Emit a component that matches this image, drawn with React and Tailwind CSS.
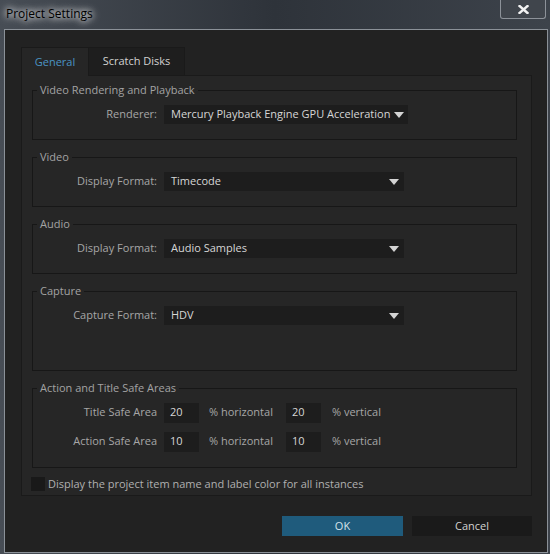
import React from 'react';

function Arrow() {
  return (
    <svg width="10" height="6" viewBox="0 0 10 6" className="shrink-0">
      <polygon points="0,0 10,0 5,6" fill="#d4d4d4" />
    </svg>
  );
}

function Dropdown({ value }) {
  return (
    <div className="w-[240px] h-[19px] bg-[#1d1d1d] flex items-center justify-between pl-[7px] pr-[5px] text-[#d6d6d6]">
      <span className="whitespace-nowrap">{value}</span>
      <Arrow />
    </div>
  );
}

function Group({ title, children, className = '' }) {
  return (
    <fieldset className={`border border-[#171717] ${className}`}>
      <legend className="ml-[4px] px-[3px] leading-[16px] text-[#a3a3a3]">{title}</legend>
      {children}
    </fieldset>
  );
}

function Row({ label, children }) {
  return (
    <div className="flex items-center h-[19px]">
      <span className="w-[124px] text-right text-[#a6a6a6] whitespace-nowrap">{label}</span>
      <div className="ml-[7px] flex items-center">{children}</div>
    </div>
  );
}

function NumBox({ value }) {
  return (
    <div className="w-[35px] h-[20px] bg-[#1d1d1d] pl-[6px] flex items-center text-[#d6d6d6]">{value}</div>
  );
}

export default function App() {
  return (
    <div className="w-[550px] h-[554px] flex flex-col bg-gradient-to-r from-[#474d55] via-[#2e333a] to-[#3d434b] font-['Open_Sans',sans-serif] text-[11px] overflow-hidden">
      {/* Title bar */}
      <div className="h-[29px] flex items-start justify-between shrink-0">
        <span className="pl-[6px] pt-[5px] text-[12px] text-black [text-shadow:0_0_6px_#fff,0_0_10px_#fff]">
          Project Settings
        </span>
        <div className="mr-[4px] w-[46px] h-[19px] border border-t-0 border-[#8d9299] rounded-b-[3px] bg-[#40454c] flex items-center justify-center">
          <svg width="11" height="9" viewBox="0 0 11 9">
            <path d="M1.5 1 L9.5 8 M9.5 1 L1.5 8" stroke="#f2f2f2" strokeWidth="2.4" strokeLinecap="square" />
          </svg>
        </div>
      </div>

      {/* Client area */}
      <div className="flex-1 ml-[4px] mr-[2px] mb-[1px] border border-[#8b9198] bg-[#222222] pl-[16px] pr-[15px] pt-[17px]">
        {/* Tabs */}
        <div className="flex h-[28px]">
          <div className="w-[68px] border border-b-0 border-[#1a1a1a] bg-[#262626] flex items-center justify-center text-[#4a94c4] relative z-10 h-[29px]">
            General
          </div>
          <div className="w-[96px] border border-l-0 border-b-0 border-[#1a1a1a] bg-[#1e1e1e] flex items-center justify-center text-[#d2d2d2]">
            Scratch Disks
          </div>
        </div>

        {/* Panel */}
        <div className="border border-[#1a1a1a] bg-[#262626] pl-[10px] pr-[14px] pt-[6px] pb-[4px]">
          <div className="flex flex-col gap-[9px]">
            <Group title="Video Rendering and Playback" className="pt-[7px] pb-[15px]">
              <Row label="Renderer:">
                <div className="h-[19px] bg-[#1d1d1d] flex items-center gap-[4px] pl-[7px] pr-[4px] text-[#d6d6d6]">
                  <span className="whitespace-nowrap">Mercury Playback Engine GPU Acceleration</span>
                  <Arrow />
                </div>
              </Row>
            </Group>

            <Group title="Video" className="pt-[7px] pb-[15px]">
              <Row label="Display Format:">
                <Dropdown value="Timecode" />
              </Row>
            </Group>

            <Group title="Audio" className="pt-[7px] pb-[15px]">
              <Row label="Display Format:">
                <Dropdown value="Audio Samples" />
              </Row>
            </Group>

            <Group title="Capture" className="pt-[7px] pb-[45px]">
              <Row label="Capture Format:">
                <Dropdown value="HDV" />
              </Row>
            </Group>

            <Group title="Action and Title Safe Areas" className="pt-[7px] pb-[16px]">
              <div className="flex flex-col gap-[10px]">
                <Row label="Title Safe Area">
                  <NumBox value="20" />
                  <span className="w-[87px] pl-[10px] text-[#a6a6a6]">% horizontal</span>
                  <NumBox value="20" />
                  <span className="pl-[11px] text-[#a6a6a6]">% vertical</span>
                </Row>
                <Row label="Action Safe Area">
                  <NumBox value="10" />
                  <span className="w-[87px] pl-[10px] text-[#a6a6a6]">% horizontal</span>
                  <NumBox value="10" />
                  <span className="pl-[11px] text-[#a6a6a6]">% vertical</span>
                </Row>
              </div>
            </Group>
          </div>

          <div className="mt-[9px] -ml-[1px] flex items-center gap-[3px]">
            <div className="w-[14px] h-[14px] bg-[#191919]" />
            <span className="text-[#b0b0b0] leading-[14px]">Display the project item name and label color for all instances</span>
          </div>
        </div>

        {/* Buttons */}
        <div className="mt-[20px] flex justify-end gap-[9px]">
          <div className="w-[121px] h-[20px] bg-[#1f5b7c] flex items-center justify-center text-[#d4e2ea]">OK</div>
          <div className="w-[120px] h-[20px] bg-[#1a1a1a] flex items-center justify-center text-[#d2d2d2]">Cancel</div>
        </div>
      </div>
    </div>
  );
}
